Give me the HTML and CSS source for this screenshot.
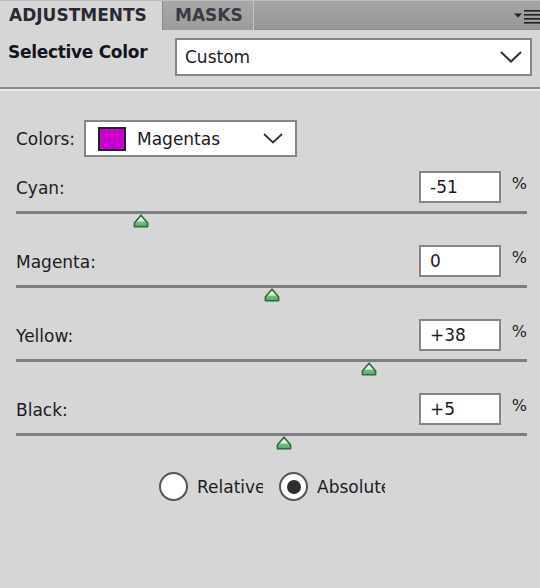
FILE: index.html
```html
<!DOCTYPE html>
<html>
<head>
<meta charset="utf-8">
<link rel="stylesheet" href="styles.css">
</head>
<body>
<div class="panel">
  <div class="tabs">
    <div class="tab tab-active">ADJUSTMENTS</div>
    <div class="tab tab-masks">MASKS</div>
    <div class="tab-rest">
      <svg class="menu-icon" width="26" height="16" viewBox="0 0 26 16">
        <path d="M0 3.5 L8 3.5 L4 7.5 Z" fill="#222"/>
        <rect x="10" y="0" width="16" height="1.6" fill="#222"/>
        <rect x="10" y="4" width="16" height="1.6" fill="#222"/>
        <rect x="10" y="8" width="16" height="1.6" fill="#222"/>
        <rect x="10" y="12" width="16" height="1.6" fill="#222"/>
      </svg>
    </div>
  </div>

  <div class="preset-row">
    <div class="title">Selective Color</div>
    <div class="select select-preset">
      <span>Custom</span>
      <svg class="chev" width="22" height="12" viewBox="0 0 22 12"><path d="M1 1 L11 10.5 L21 1" fill="none" stroke="#333" stroke-width="2"/></svg>
    </div>
  </div>
  <div class="separator"></div>

  <div class="colors-row">
    <span class="lbl">Colors:</span>
    <div class="select select-colors">
      <span class="swatch"></span>
      <span class="sel-text">Magentas</span>
      <svg class="chev" width="20" height="11" viewBox="0 0 20 11"><path d="M1 1 L10 9.5 L19 1" fill="none" stroke="#333" stroke-width="1.8"/></svg>
    </div>
  </div>

  <div class="sliders">
    <div class="adj">
      <div class="adj-head">
        <span class="lbl">Cyan:</span>
        <div class="num">-51</div>
        <span class="pct">%</span>
      </div>
      <div class="track"><span class="thumb" style="left:24.5%"><svg width="16" height="14" viewBox="0 0 16 14"><path d="M8 1.2 L14.6 9 L14.6 12.8 L1.4 12.8 L1.4 9 Z" fill="url(#g1)" stroke="#2f6a3a" stroke-width="1.6" stroke-linejoin="round"/></svg></span></div>
    </div>
    <div class="adj">
      <div class="adj-head">
        <span class="lbl">Magenta:</span>
        <div class="num">0</div>
        <span class="pct">%</span>
      </div>
      <div class="track"><span class="thumb" style="left:50%"><svg width="16" height="14" viewBox="0 0 16 14"><path d="M8 1.2 L14.6 9 L14.6 12.8 L1.4 12.8 L1.4 9 Z" fill="url(#g1)" stroke="#2f6a3a" stroke-width="1.6" stroke-linejoin="round"/></svg></span></div>
    </div>
    <div class="adj">
      <div class="adj-head">
        <span class="lbl">Yellow:</span>
        <div class="num">+38</div>
        <span class="pct">%</span>
      </div>
      <div class="track"><span class="thumb" style="left:69%"><svg width="16" height="14" viewBox="0 0 16 14"><path d="M8 1.2 L14.6 9 L14.6 12.8 L1.4 12.8 L1.4 9 Z" fill="url(#g1)" stroke="#2f6a3a" stroke-width="1.6" stroke-linejoin="round"/></svg></span></div>
    </div>
    <div class="adj">
      <div class="adj-head">
        <span class="lbl">Black:</span>
        <div class="num">+5</div>
        <span class="pct">%</span>
      </div>
      <div class="track"><span class="thumb" style="left:52.5%"><svg width="16" height="14" viewBox="0 0 16 14"><path d="M8 1.2 L14.6 9 L14.6 12.8 L1.4 12.8 L1.4 9 Z" fill="url(#g1)" stroke="#2f6a3a" stroke-width="1.6" stroke-linejoin="round"/></svg></span></div>
    </div>
  </div>

  <div class="radios">
    <div class="radio-item">
      <span class="radio"></span>
      <span class="radio-lbl lbl-rel">Relative</span>
    </div>
    <div class="radio-item">
      <span class="radio checked"><span class="dot"></span></span>
      <span class="radio-lbl lbl-abs">Absolute</span>
    </div>
  </div>

  <svg class="defs" width="0" height="0">
    <defs>
      <linearGradient id="g1" x1="0" y1="0" x2="0" y2="1">
        <stop offset="0" stop-color="#f2f8f2"/>
        <stop offset="0.5" stop-color="#d8eed9"/>
        <stop offset="0.62" stop-color="#6cc07a"/>
        <stop offset="1" stop-color="#55aa66"/>
      </linearGradient>
    </defs>
  </svg>
</div>
</body>
</html>
```
FILE: styles.css
```css
* { box-sizing: border-box; }
html, body { margin: 0; padding: 0; }
body {
  background: #d6d6d6;
  font-family: "DejaVu Sans", Verdana, sans-serif;
  font-size: 17px;
  color: #1b1b26;
}
.panel {
  width: 540px;
  height: 588px;
  background: #d6d6d6;
  overflow: hidden;
}
.tabs {
  display: flex;
  height: 30px;
  background: linear-gradient(#a6a6a6, #969696);
  border-top: 1px solid #bdbdbd;
}
.tab {
  font-weight: bold;
  font-size: 17px;
  line-height: 29px;
  white-space: nowrap;
}
.tab-active {
  width: 162px;
  padding-left: 9px;
  background: #d6d6d6;
  color: #2a2a36;
}
.tab-masks {
  width: 92px;
  padding-left: 12px;
  background: linear-gradient(#a8a8a8, #9c9c9c);
  border-left: 1px solid #8a8a8a;
  border-right: 1px solid #c4c4c4;
  color: #3a3a44;
}
.tab-rest {
  flex: 1;
  display: flex;
  justify-content: flex-end;
  align-items: flex-start;
  padding-top: 9px;
  border-bottom: 1px solid #8c8c8c;
}
.menu-icon { display: block; }

.preset-row {
  display: flex;
  align-items: center;
  padding: 8px 8px 0 8px;
}
.title {
  width: 167px;
  font-weight: bold;
  font-size: 17px;
  letter-spacing: -0.3px;
  align-self: flex-start;
  padding-top: 4px;
  color: #14141e;
  white-space: nowrap;
}
.select {
  display: flex;
  align-items: center;
  background: #fff;
  border: 2px solid #858585;
}
.select-preset {
  width: 357px;
  height: 38px;
  padding: 0 8px 0 8px;
  justify-content: space-between;
}
.chev { display: block; }
.separator {
  margin-top: 11px;
  height: 4px;
  border-top: 2px solid #8b8b8b;
  border-bottom: 2px solid #ebebeb;
}

.colors-row {
  display: flex;
  align-items: center;
  margin-top: 29px;
  padding-left: 16px;
}
.colors-row .lbl { width: 68px; }
.select-colors {
  width: 213px;
  height: 37px;
  padding: 0 12px 0 12px;
}
.swatch {
  width: 28px;
  height: 24px;
  background: #cc00cc;
  border: 2px solid #222;
  margin-right: 11px;
}
.sel-text { flex: 1; }

.sliders {
  padding: 0 13px 0 16px;
  margin-top: 14px;
  display: flex;
  flex-direction: column;
  gap: 31px;
}
.adj-head {
  display: flex;
  align-items: center;
  height: 32px;
}
.adj-head .lbl { flex: 1; padding-top: 2px; }
.num {
  width: 82px;
  height: 32px;
  background: #fff;
  border: 2px solid #858585;
  padding-left: 9px;
  line-height: 28px;
}
.pct {
  width: 26px;
  text-align: right;
  align-self: flex-start;
  padding-top: 3px;
  font-size: 16px;
}
.track {
  position: relative;
  margin-top: 8px;
  height: 3px;
  background: #7e7e7e;
}
.thumb {
  position: absolute;
  top: 3px;
  margin-left: -8px;
  width: 16px;
  height: 14px;
}
.thumb svg { display: block; }

.radios {
  display: flex;
  justify-content: center;
  gap: 16px;
  margin-top: 36px;
  padding-left: 4px;
}
.radio-item {
  display: flex;
  align-items: center;
}
.radio {
  width: 29px;
  height: 29px;
  border-radius: 50%;
  background: #fff;
  border: 2px solid #555;
  display: flex;
  align-items: center;
  justify-content: center;
  margin-right: 9px;
}
.dot {
  width: 14px;
  height: 14px;
  border-radius: 50%;
  background: #2e2e2e;
}
.radio-lbl {
  overflow: hidden;
  white-space: nowrap;
}
.lbl-rel { width: 66px; }
.lbl-abs { width: 68px; }
.defs { position: absolute; }
```
